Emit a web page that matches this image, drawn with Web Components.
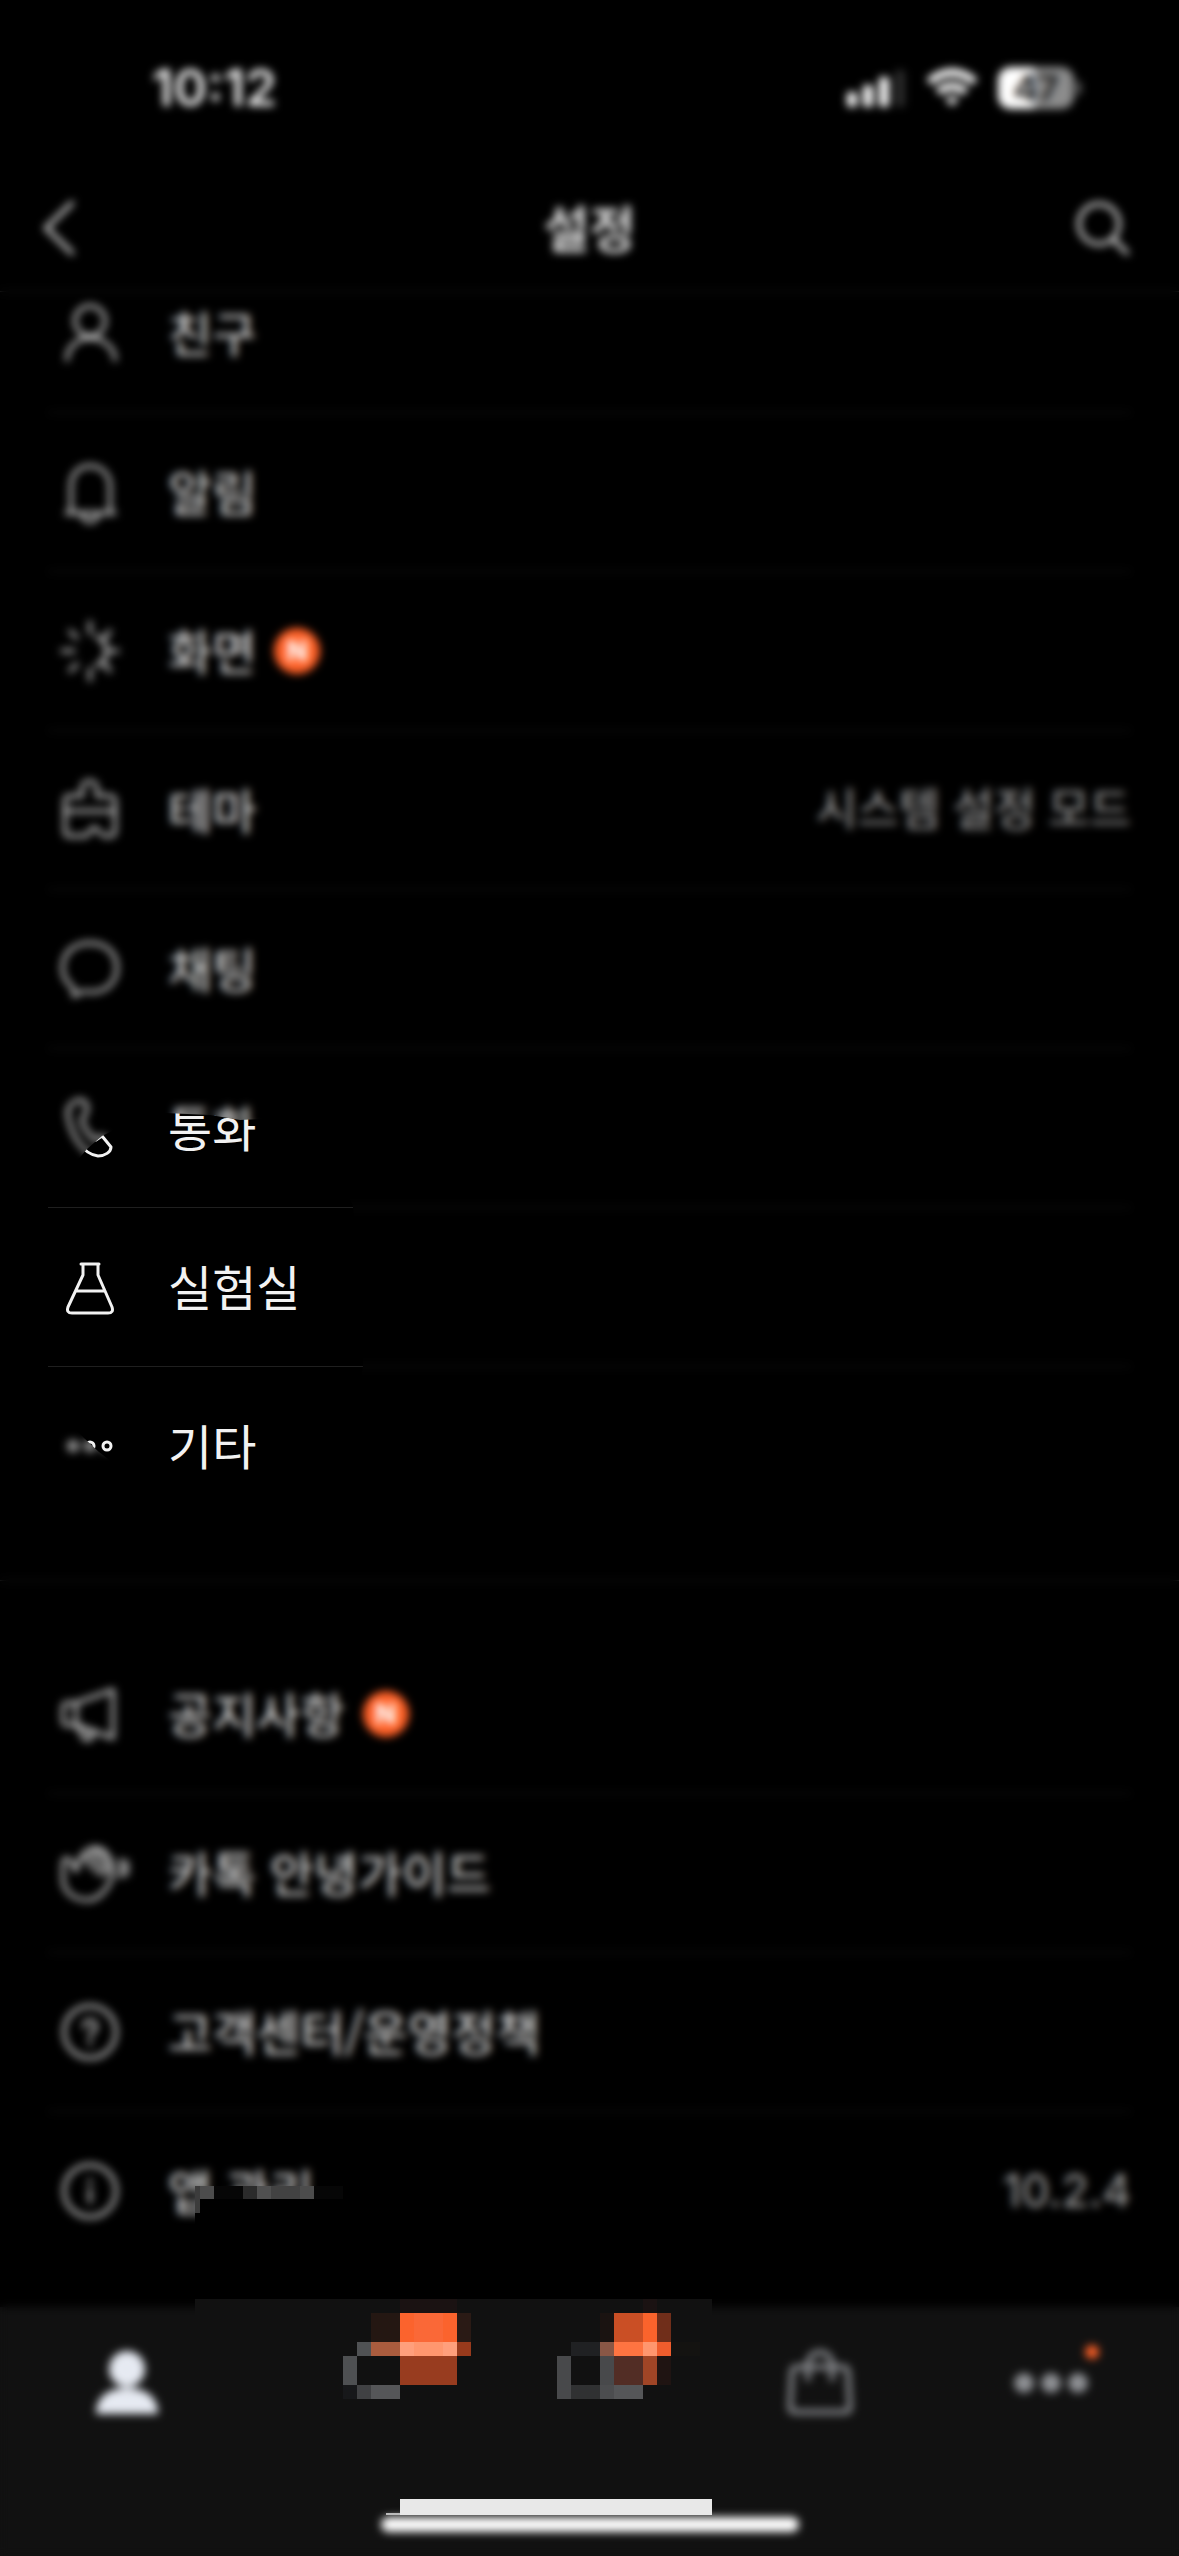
<!DOCTYPE html>
<html lang="ko">
<head>
<meta charset="utf-8">
<meta name="viewport" content="width=device-width, initial-scale=1">
<title>설정</title>
<style>
  html, body { margin: 0; background: #000; }
  body { font-family: Inter, "Noto Sans CJK KR", sans-serif; color: #f2f2f2; }
</style>
</head>
<body>
<settings-app>
  <status-bar slot="top" time="10:12" battery="47"></status-bar>
  <nav-header slot="top">설정</nav-header>
  <settings-group>
    <settings-row icon="friend">친구</settings-row>
    <settings-row icon="bell">알림</settings-row>
    <settings-row icon="sun" fresh>화면</settings-row>
    <settings-row icon="theme" value="시스템 설정 모드">테마</settings-row>
    <settings-row icon="chat">채팅</settings-row>
    <settings-row icon="phone">통화</settings-row>
    <settings-row icon="flask">실험실</settings-row>
    <settings-row icon="dots">기타</settings-row>
  </settings-group>
  <settings-group>
    <settings-row icon="horn" fresh>공지사항</settings-row>
    <settings-row icon="hand">카톡 안녕가이드</settings-row>
    <settings-row icon="help">고객센터/운영정책</settings-row>
    <settings-row icon="info" value="10.2.4" masked>앱 관리</settings-row>
  </settings-group>
  <tab-bar slot="bottom"></tab-bar>
</settings-app>

<script>
const ICONS = {
  friend: '<circle cx="42" cy="30" r="15"/><path d="M19 69c0-13 11-22 23-22s25 9 25 22"/>',
  bell: '<path d="M23 63V36c0-12 8-20 19-20s20 8 20 20v27M18 63h49M34 65c2 9 14 9 16 0"/>',
  sun: '<path d="M42 13v11M42 60v11M14 42h12M58 42h12M22 22l7 7M22 62l7-7M62 22l-6 8M62 62l-6-8M48 27c14 7 14 23 0 30"/>',
  theme: '<path d="M21 28h13V20c0-9 15-9 15 0v8h13q5 0 5 5v30q0 5-5 5h-6l-10-9-8 9H21q-4 0-4-5V33q0-5 4-5zM17 43h50"/>',
  chat: '<path d="M25 60C7 49 12 16 42 16c36 0 35 49 2 49-4 0-7 0-9-1l-9 5z"/>',
  phone: '<path d="M20 30c-3-14 16-22 19-10 2 8-6 10-5 16 2 6 9 16 14 18l6-4 9 11c0 5-6 9-13 9-16-2-27-22-30-40z"/>',
  flask: '<path d="M33 19h18M35 19v11L20 62q-2 6 4 6h36q6 0 4-6L50 30V19M28 46h29"/>',
  dots: '<circle cx="25" cy="42" r="4"/><circle cx="42" cy="42" r="4"/><circle cx="59" cy="42" r="4"/>',
  horn: '<path d="M19 31h9l37-13v48L28 53h-9q-4 0-4-5V36q0-5 4-5zM28 31v22M30 54l6 13q6 2 8-2l-3-8"/>',
  hand: '<path d="M15 48V32q2-8 8-2l5 10c2-11 8-22 18-23 13-1 19 14 18 27-2 13-14 25-24 25-14 0-25-8-25-21z"/><path d="M36 29l15-10M40 35l17-12M46 40l14-10M52 44l10-7M72 29q3 8 0 17M78 30q2 7 0 14"/>',
  help: '<circle cx="42" cy="42" r="26"/><path d="M36 37c0-9 13-8 12 0 0 5-6 5-6 9M42 51v3"/>',
  info: '<circle cx="42" cy="42" r="26"/><path d="M42 31v3M42 40v13"/>'
};
const icon = name => `<svg viewBox="0 0 84 84" aria-hidden="true">${ICONS[name]}</svg>`;
const make = (tag, render) => customElements.define(tag, class extends HTMLElement {
  connectedCallback() {
    if (this.shadowRoot) return;
    this.attachShadow({ mode: 'open' }).innerHTML = render(this);
  }
});
const cells = list => list.map(([x, y, w, h, c]) =>
  `<rect x="${x}" y="${y}" width="${w}" height="${h}" fill="${c}"/>`).join('');

make('settings-app', () => `
  <style>
    :host { display: flex; flex-direction: column; min-height: 100vh; position: relative; background: #000; overflow: hidden; }
    header { position: relative; z-index: 1; background: #000; border-bottom: 1px solid #1f1f1f; }
    main { flex: 1; margin-top: -38px; }
  </style>
  <header><slot name="top"></slot></header>
  <main><slot></slot></main>
  <slot name="bottom"></slot>
  <soft-veil></soft-veil>`);

/* Frosted layer over the page, open around the lab menu entry. */
make('soft-veil', () => `
  <style>
    :host {
      position: absolute; inset: 0; z-index: 2; pointer-events: none;
      backdrop-filter: blur(4px);
      clip-path: polygon(evenodd,
        0 0, 100% 0, 100% 100%, 0 100%, 0 0,
        102px 1136px, 130px 1122px, 165px 1113px, 210px 1115px, 240px 1120px, 262px 1119px, 330px 1150px,
        353px 1207px, 363px 1366px, 340px 1480px, 180px 1500px, 120px 1468px, 99px 1452px, 84px 1438px,
        40px 1390px, 30px 1280px, 44px 1200px, 87px 1149px, 102px 1136px, 0 0);
    }
  </style>`);

make('status-bar', el => `
  <style>
    :host { display: flex; justify-content: space-between; align-items: center; height: 176px; padding: 0 98px 0 152px; }
    time { font: 600 51px/60px Inter, sans-serif; }
    .side { display: flex; align-items: center; gap: 20px; }
    svg { display: block; }
    .battery { display: flex; align-items: center; }
    .cell { width: 76px; height: 42px; border-radius: 13px; background: linear-gradient(90deg, #fff 47%, #8c8c8c 47%);
      color: #222; font: 700 36px/42px Inter, sans-serif; text-align: center; }
    .cap { width: 4px; height: 14px; margin-left: 3px; border-radius: 0 4px 4px 0; background: #777; }
  </style>
  <time>${el.getAttribute('time')}</time>
  <div class="side">
    <svg width="60" height="40" fill="#fff" aria-hidden="true">
      <rect x="1" y="24" width="10" height="15" rx="3"/><rect x="17" y="17" width="10" height="22" rx="3"/>
      <rect x="33" y="9" width="10" height="30" rx="3"/><rect x="49" y="2" width="10" height="37" rx="3" fill="#2c2c2c"/>
    </svg>
    <svg width="52" height="40" fill="none" stroke="#fff" stroke-width="8" aria-hidden="true">
      <path d="M3 14q23-19 46 0M12 24q14-11 28 0"/><path d="M19 31q7-5 14 0l-7 7z" fill="#fff" stroke="none"/>
    </svg>
    <div class="battery"><div class="cell">${el.getAttribute('battery')}</div><div class="cap"></div></div>
  </div>`);

make('nav-header', () => `
  <style>
    :host { display: grid; grid-template-columns: 1fr auto 1fr; align-items: center; height: 103px; padding: 0 40px 12px; }
    h1 { margin: 0; padding-bottom: 4px; font: 700 50px/72px "Noto Sans CJK KR", sans-serif; color: #dcdcdc; }
    button { all: unset; width: 60px; height: 72px; }
    button:last-child { justify-self: end; }
    svg { display: block; width: 60px; height: 72px; fill: none; stroke: #e0e0e0; stroke-width: 4; stroke-linecap: round; overflow: visible; }
  </style>
  <button aria-label="뒤로"><svg viewBox="0 0 60 72"><path d="M32 11L6 36l26 25"/></svg></button>
  <h1><slot></slot></h1>
  <button aria-label="검색"><svg viewBox="0 0 60 72"><circle cx="20" cy="32" r="20"/><path d="M34 47l14 14"/></svg></button>`);

make('settings-group', () => `
  <style>
    :host { display: block; padding-bottom: 54px; }
    :host(:not(:first-of-type)) { border-top: 1px solid #1f1f1f; padding: 54px 0 36px; }
  </style>
  <slot></slot>`);

make('settings-row', el => `
  <style>
    :host { display: block; padding: 0 48px; }
    a { display: flex; align-items: center; position: relative; height: 158px; border-bottom: 1px solid #1f1f1f; color: inherit; text-decoration: none; }
    :host(:last-of-type) a { border-color: transparent; }
    svg { width: 84px; height: 84px; margin-right: 36px; fill: none; stroke: currentColor; stroke-width: 3; stroke-linecap: round; stroke-linejoin: round; }
    .label { padding-bottom: 4px; font: 400 48px/72px "Noto Sans CJK KR", sans-serif; }
    .new { width: 46px; height: 46px; margin-left: 18px; border-radius: 50%; background: #ff6026; color: #fff; font: 800 28px/46px Inter, sans-serif; text-align: center; }
    .value { margin-left: auto; font: 400 45px/72px Inter, "Noto Sans CJK KR", sans-serif; color: #a8a8a8; }
  </style>
  <a href="#${el.getAttribute('icon')}">
    ${icon(el.getAttribute('icon'))}
    <span class="label"><slot></slot></span>
    ${el.hasAttribute('fresh') ? '<span class="new">N</span>' : ''}
    ${el.hasAttribute('value') ? `<span class="value">${el.getAttribute('value')}</span>` : ''}
    ${el.hasAttribute('masked') ? '<pixel-label></pixel-label>' : ''}
  </a>`);

/* Pixelated cover that hides the lower part of a label. */
make('pixel-label', () => `
  <style>
    :host { position: absolute; left: 147px; top: 74px; z-index: 3; line-height: 0; }
    svg { display: block; }
  </style>
  <svg width="148" height="44" shape-rendering="crispEdges" aria-hidden="true">${cells([
    [0, 0, 148, 44, '#000'], [0, 0, 5, 27, '#3c3c3c'], [5, 0, 14, 13, '#4c4c4c'], [19, 0, 29, 13, '#060606'],
    [48, 0, 14, 13, '#2b2b2b'], [62, 0, 14, 13, '#505050'], [76, 0, 29, 13, '#424242'],
    [105, 0, 14, 13, '#4c4c4c'], [119, 0, 29, 13, '#060606']])}</svg>`);

make('tab-bar', () => `
  <style>
    :host { display: block; position: relative; background: #111; height: 249px; }
    nav { display: grid; grid-template-columns: repeat(5, 1fr); padding: 0 12px; }
    a { display: flex; justify-content: center; height: 152px; color: #8e9094; }
    a:first-child { color: #e6eaf2; }
    svg { display: block; width: 96px; height: 152px; overflow: visible; }
    .home { width: 418px; height: 15px; margin: 58px auto 0; border-radius: 8px; background: #fff; }
    .pixels { position: absolute; left: 195px; top: -8px; z-index: 3; width: 517px; height: 217px; }
  </style>
  <nav>
    <a href="#friends" aria-label="친구"><svg viewBox="0 0 96 152" fill="currentColor"><circle cx="47" cy="62" r="18"/><path d="M16 107c0-17 12-26 31-26s31 9 31 26z"/></svg></a>
    <a href="#chats" aria-label="채팅"></a>
    <a href="#open" aria-label="오픈채팅"></a>
    <a href="#shop" aria-label="쇼핑"><svg viewBox="0 0 96 152" fill="none" stroke="currentColor" stroke-width="5" stroke-linecap="round"><path d="M24 60h46q4 0 5 4l2 36q0 5-5 5H22q-5 0-5-5l2-36q1-4 5-4zM35 72V58c0-17 24-17 24 0v14"/></svg></a>
    <a href="#more" aria-label="더보기"><svg viewBox="0 0 96 152" fill="currentColor"><circle cx="20" cy="76" r="10"/><circle cx="47" cy="76" r="10"/><circle cx="74" cy="76" r="10"/><circle cx="88" cy="45" r="7" fill="#ff6026"/></svg></a>
  </nav>
  <div class="home"></div>
  <svg class="pixels" viewBox="0 0 517 217" shape-rendering="crispEdges" aria-hidden="true">${cells([
    [0, 0, 517, 100, '#111'],
    [205, 0, 57, 14, '#1a1212'], [176, 14, 29, 29, '#241712'], [205, 14, 57, 29, '#fb632d'], [219, 14, 29, 29, '#fa6837'], [262, 14, 14, 29, '#2a1a15'],
    [162, 43, 14, 14, '#505254'], [176, 43, 29, 14, '#aa5c3e'], [205, 43, 57, 14, '#ff9f7c'], [219, 43, 29, 14, '#ff976f'], [262, 43, 14, 14, '#983a1c'],
    [148, 57, 14, 29, '#4e5052'], [205, 57, 57, 29, '#983c1f'],
    [148, 86, 14, 14, '#17181a'], [162, 86, 14, 14, '#404143'], [176, 86, 29, 14, '#555658'],
    [448, 0, 14, 14, '#1a1212'], [405, 14, 14, 29, '#1a1311'], [419, 14, 29, 29, '#ca4f25'], [448, 14, 14, 29, '#fa632c'], [462, 14, 14, 29, '#702e1a'],
    [376, 43, 29, 14, '#202123'], [405, 43, 14, 14, '#895746'], [419, 43, 29, 14, '#ff7441'], [448, 43, 14, 14, '#ff966e'], [462, 43, 14, 14, '#f05d2d'], [476, 43, 29, 14, '#141311'],
    [362, 57, 14, 43, '#48494b'], [405, 57, 14, 29, '#48494b'], [419, 57, 29, 29, '#522d25'], [448, 57, 14, 29, '#a04526'], [462, 57, 14, 29, '#1f1412'],
    [376, 86, 29, 14, '#303132'], [405, 86, 14, 14, '#4c4d4f'], [419, 86, 29, 14, '#555658'],
    [205, 200, 312, 16, '#e8e8e8'], [191, 214, 14, 2, '#bbb']])}</svg>`);
</script>
</body>
</html>
